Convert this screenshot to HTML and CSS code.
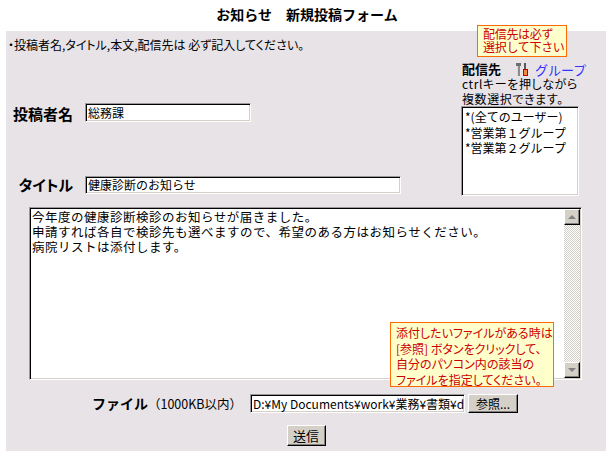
FILE: index.html
```html
<!DOCTYPE html>
<html lang="ja">
  <head>
    <meta charset="UTF-8" />
    <title>お知らせ 新規投稿フォーム</title>
    <link rel="stylesheet" href="styles.css">
  </head>
  <body>
    <h1>お知らせ　新規投稿フォーム</h1>

    <div class="panel">
      <p class="notice">・投稿者名,タイトル,本文,配信先は 必ず記入してください。</p>

      <div class="hint hint-dest">配信先は必ず<br>選択して下さい</div>

      <div class="upper">
        <div class="fields">
          <div class="field field-author">
            <label class="field-label">投稿者名</label>
            <div class="input input-author">総務課</div>
          </div>
          <div class="field field-title">
            <label class="field-label">タイトル</label>
            <div class="input input-title">健康診断のお知らせ</div>
          </div>
        </div>

        <div class="dest">
          <div class="dest-head">
            <span class="dest-label">配信先</span>
            <svg class="dest-icon" width="13" height="13" viewBox="0 0 13 13">
              <rect x="0" y="0" width="5" height="3" fill="#6e6e6e" />
              <rect x="1" y="3" width="3" height="10" fill="#8c8c8c" />
              <rect x="1" y="3" width="1" height="10" fill="#d8d8d8" />
              <rect x="8" y="0" width="2" height="6" fill="#5a5a5a" />
              <rect x="7.5" y="6.5" width="4" height="6" fill="#f08a40" stroke="#c00000" />
            </svg>
            <a class="dest-link">グループ</a>
          </div>
          <p class="dest-note">ctrlキーを押しながら<br>複数選択できます。</p>
          <div class="listbox">
            <div class="option">*(全てのユーザー)</div>
            <div class="option">*営業第１グループ</div>
            <div class="option">*営業第２グループ</div>
          </div>
        </div>
      </div>

      <div class="textbox">
        <div class="textbox-text">今年度の健康診断検診のお知らせが届きました。<br>申請すれば各自で検診先も選べますので、希望のある方はお知らせください。<br>病院リストは添付します。</div>
        <div class="scrollbar">
          <div class="sb-btn"><span class="arrow-up"></span></div>
          <div class="sb-track"></div>
          <div class="sb-btn"><span class="arrow-down"></span></div>
        </div>
        <div class="hint hint-file">添付したいファイルがある時は<br>[参照] ボタンをクリックして、<br>自分のパソコン内の該当の<br>ファイルを指定してください。</div>
      </div>

      <div class="file-row">
        <span class="file-label">ファイル</span>
        <span class="file-limit">（1000KB以内）</span>
        <div class="input input-file">D:¥My Documents¥work¥業務¥書類¥d</div>
        <button class="btn btn-browse">参照...</button>
      </div>

      <div class="submit-row">
        <button class="btn btn-submit">送信</button>
      </div>
    </div>
  </body>
</html>
```

FILE: styles.css
```css
* {
  box-sizing: border-box;
}

body {
  margin: 0;
  width: 614px;
  font-family: "Noto Sans CJK JP", sans-serif;
  font-size: 12px;
  color: #000;
  background: #fff;
}

h1 {
  margin: 0 0 9px;
  padding-top: 6px;
  font-size: 14px;
  line-height: 16px;
  text-align: center;
}

.panel {
  position: relative;
  margin-left: 6px;
  width: 600px;
  height: 420px;
  padding-top: 6px;
  background: #e7e3e7;
}

.notice {
  margin: 0;
  padding-left: 2px;
  line-height: 16px;
  font-feature-settings: "palt";
}

.hint {
  position: absolute;
  background: #ffffcc;
  border: 1px solid #ff6a00;
  color: #cc0000;
}

.hint-dest {
  left: 471px;
  top: -6px;
  width: 90px;
  height: 32px;
  padding: 2px 0 0 5px;
  line-height: 12.5px;
  letter-spacing: -0.3px;
}

.upper {
  display: flex;
}

.fields {
  flex: 1;
}

.field {
  display: flex;
}

.field-author {
  margin-top: 50px;
  align-items: flex-end;
}

.field-title {
  margin-top: 54px;
  align-items: center;
}

.field-label {
  width: 67px;
  margin-right: 12px;
  text-align: right;
  font-size: 15px;
  font-weight: bold;
  line-height: 16px;
  font-feature-settings: "palt";
}

.input {
  background: #fff;
  border-top: 1px solid #9a9a9a;
  border-left: 1px solid #9a9a9a;
  border-right: 1px solid #fff;
  border-bottom: 1px solid #fff;
  box-shadow: inset 1px 1px 0 #000, inset -1px -1px 0 #d4d0c8;
  padding: 0 2px;
  overflow: hidden;
  white-space: nowrap;
}

.input-author {
  width: 166px;
  height: 19px;
  line-height: 17px;
}

.input-title {
  width: 316px;
  height: 18px;
  line-height: 16px;
}

.dest {
  width: 145px;
  margin-top: 9px;
}

.dest-head {
  display: flex;
  align-items: center;
  height: 14px;
  margin-left: 1px;
}

.dest-label {
  font-size: 13px;
  font-weight: bold;
  line-height: 14px;
}

.dest-icon {
  margin: 0 6px 0 15px;
}

.dest-link {
  color: #3333ff;
  font-size: 13px;
}

.dest-note {
  margin: 0 0 0 1px;
  line-height: 15px;
  letter-spacing: 0.6px;
  font-feature-settings: "palt";
}

.listbox {
  width: 118px;
  height: 90px;
  background: #fff;
  border-top: 1px solid #9a9a9a;
  border-left: 1px solid #9a9a9a;
  border-right: 1px solid #fff;
  border-bottom: 1px solid #fff;
  box-shadow: inset 1px 1px 0 #000, inset -1px -1px 0 #d4d0c8;
  padding: 2px 0 0 3px;
}

.option {
  line-height: 15.5px;
  white-space: nowrap;
}

.textbox {
  position: relative;
  display: flex;
  margin: 11px 0 0 23px;
  width: 553px;
  height: 173px;
  background: #fff;
  border-top: 1px solid #9a9a9a;
  border-left: 1px solid #9a9a9a;
  border-right: 1px solid #fff;
  border-bottom: 1px solid #fff;
  box-shadow: inset 1px 1px 0 #000, inset -1px -1px 0 #d4d0c8;
  padding: 1px 1px 1px 2px;
}

.textbox-text {
  flex: 1;
  font-size: 12.5px;
  line-height: 15px;
  letter-spacing: 0.5px;
}

.scrollbar {
  display: flex;
  flex-direction: column;
  width: 16px;
}

.sb-btn {
  display: flex;
  align-items: center;
  justify-content: center;
  width: 16px;
  height: 16px;
  background: #d4d0c8;
  border-top: 1px solid #fff;
  border-left: 1px solid #fff;
  border-right: 1px solid #000;
  border-bottom: 1px solid #000;
  box-shadow: inset -1px -1px 0 #808080;
}

.sb-track {
  flex: 1;
  background: repeating-conic-gradient(#d4d0c8 0 25%, #fff 0 50%) 0 0 / 2px 2px;
}

.arrow-up,
.arrow-down {
  width: 0;
  height: 0;
  border-left: 4px solid transparent;
  border-right: 4px solid transparent;
}

.arrow-up {
  border-bottom: 4px solid #808080;
}

.arrow-down {
  border-top: 4px solid #808080;
}

.hint-file {
  left: 360px;
  top: 114px;
  width: 164px;
  height: 65px;
  padding: 2px 0 0 5px;
  line-height: 15.5px;
  font-feature-settings: "palt";
}

.file-row {
  display: flex;
  align-items: center;
  justify-content: center;
  margin-top: 13px;
  padding-right: 2px;
}

.file-label {
  font-size: 14px;
  font-weight: bold;
}

.file-limit {
  margin-right: 8px;
  font-size: 12.5px;
}

.input-file {
  width: 215px;
  height: 19px;
  line-height: 17px;
  margin-right: 3px;
}

.btn {
  padding: 0;
  font-family: inherit;
  font-size: 12px;
  background: #d4d0c8;
  border-top: 1px solid #fff;
  border-left: 1px solid #fff;
  border-right: 1px solid #000;
  border-bottom: 1px solid #000;
  box-shadow: inset -1px -1px 0 #808080;
  color: #000;
}

.btn-browse {
  width: 50px;
  height: 19px;
}

.submit-row {
  display: flex;
  justify-content: center;
  margin-top: 12px;
}

.btn-submit {
  width: 39px;
  height: 21px;
  font-size: 13px;
}
```
